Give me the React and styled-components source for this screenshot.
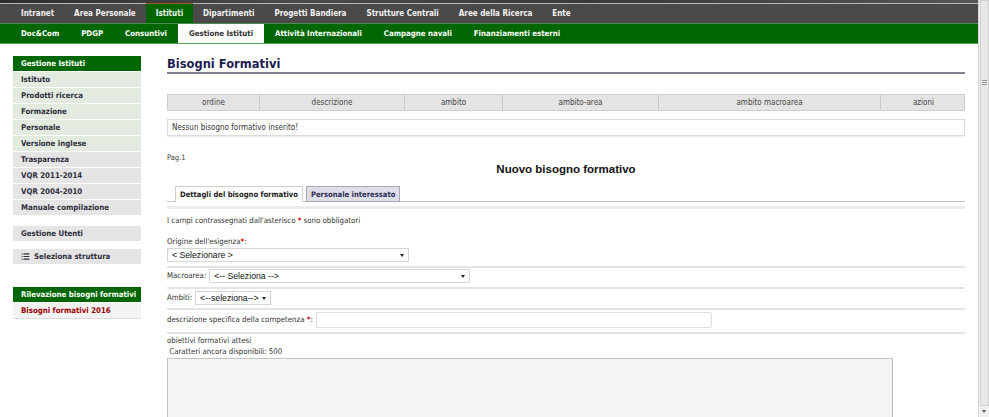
import React from 'react';
import styled, { createGlobalStyle, css } from 'styled-components';
import { List } from 'lucide-react';

const SANS = `"DejaVu Sans Condensed", "DejaVu Sans", Verdana, sans-serif`;
const ARIAL = `"Liberation Sans", Arial, sans-serif`;
const GREEN = '#006600';

const GlobalStyle = createGlobalStyle`
  html, body {
    margin: 0;
    padding: 0;
    background: #fff;
  }
  body {
    font-family: ${SANS};
    font-stretch: condensed;
    color: #333;
  }
`;

const Page = styled.div`
  display: flex;
  width: 989px;
  height: 417px;
  overflow: hidden;
`;

const Site = styled.div`
  flex: 1;
  min-width: 0;
`;

const TopStrip = styled.div`
  height: 3px;
  background: linear-gradient(90deg, #2e2e2e, #4a4a4a 30%, #3a3a3a 60%, #555 100%);
  border-bottom: 1px solid #b8b8b8;
`;

const Nav = styled.nav`
  display: flex;
  height: 19px;
  padding-left: 11px;
  background: #4a4a4b;
`;

const NavItem = styled.a`
  display: flex;
  align-items: center;
  padding: 0 10px;
  font-size: 8px;
  font-weight: bold;
  color: #f2f2f2;
  white-space: nowrap;
  ${(p) =>
    p.$active &&
    css`
      background: ${GREEN};
      box-shadow: inset 0 1px 0 #8a5a2a;
      margin-top: -1px;
    `}
`;

const SubNav = styled.nav`
  display: flex;
  height: 19px;
  padding-left: 10px;
  background: ${GREEN};
  border-top: 1px solid #4d8a4d;
  border-bottom: 1px solid #58a858;
`;

const SubNavItem = styled.a`
  display: flex;
  align-items: center;
  padding: 0 11px;
  font-size: 7.8px;
  font-weight: bold;
  color: #fff;
  white-space: nowrap;
  ${(p) =>
    p.$active &&
    css`
      background: #fff;
      color: #333;
    `}
`;

const Body = styled.div`
  display: flex;
  gap: 26px;
  padding: 12px 0 0 13px;
`;

const Sidebar = styled.aside`
  width: 128px;
  flex-shrink: 0;
  display: flex;
  flex-direction: column;
`;

const MenuGroup = styled.div`
  display: flex;
  flex-direction: column;
  gap: 1px;
  margin-bottom: ${(p) => p.$after || 0}px;
`;

const MenuHeader = styled.div`
  height: 15px;
  display: flex;
  align-items: center;
  padding-left: 8px;
  background: ${GREEN};
  color: #fff;
  font-size: 7.8px;
  font-weight: bold;
`;

const MenuItem = styled.div`
  height: 15px;
  display: flex;
  align-items: center;
  gap: 4px;
  padding-left: 8px;
  background: ${(p) => (p.$tint ? '#e3eadf' : '#e5e5e5')};
  color: #2e2e3c;
  font-size: 7.8px;
  font-weight: bold;
  ${(p) =>
    p.$current &&
    css`
      background: #f3f3f3;
      color: #9a0000;
      border-bottom: 1px solid #dcdcdc;
    `}
`;

const Main = styled.main`
  width: 798px;
  flex-shrink: 0;
  display: flex;
  flex-direction: column;
`;

const Title = styled.h1`
  margin: 0;
  height: 16px;
  line-height: 16px;
  font-family: "DejaVu Sans", Verdana, sans-serif;
  font-stretch: normal;
  font-size: 11.5px;
  font-weight: bold;
  color: #1d1d4f;
  border-bottom: 2px solid #80808f;
`;

const Table = styled.div`
  margin-top: 20px;
  display: grid;
  grid-template-columns: 92px 145px 98px 156px 222px 85px;
  height: 17px;
  border: 1px solid #cfcfcf;
  box-sizing: border-box;
  background: #e4e4e4;
`;

const HeadCell = styled.div`
  display: flex;
  align-items: center;
  justify-content: center;
  font-size: 8px;
  color: #444;
  border-right: ${(p) => (p.$last ? 'none' : '1px solid #c8c8c8')};
`;

const EmptyBox = styled.div`
  margin-top: 8px;
  height: 17px;
  box-sizing: border-box;
  border: 1px solid #dcdcdc;
  box-shadow: 0 1px 1px #eee;
  display: flex;
  align-items: center;
  padding-left: 4px;
  font-size: 8px;
  color: #333;
`;

const Pager = styled.div`
  margin-top: 18px;
  font-size: 7.5px;
  line-height: 8px;
  color: #444;
`;

const Subtitle = styled.h2`
  margin: 0;
  text-align: center;
  font-family: ${ARIAL};
  font-stretch: normal;
  font-size: 11.5px;
  line-height: 14px;
  font-weight: bold;
  color: #111;
`;

const Tabs = styled.div`
  margin-top: 10px;
  display: flex;
  gap: 3px;
  padding-left: 8px;
  border-bottom: 1px solid #c4c4c4;
`;

const Tab = styled.div`
  height: 14px;
  display: flex;
  align-items: center;
  padding: 0 4px;
  font-size: 7.6px;
  font-weight: bold;
  margin-bottom: -1px;
  border: 1px solid #cfcfcf;
  border-bottom: none;
  ${(p) =>
    p.$active
      ? css`
          background: #fff;
          color: #222;
          height: 15px;
        `
      : css`
          background: #dedee8;
          color: #2d2d55;
          border-color: #a8a8b8;
          border-bottom: 1px solid #a8a8b8;
        `}
`;

const Panel = styled.div`
  margin-top: 4px;
  border-top: 3px solid #ececec;
  display: flex;
  flex-direction: column;
`;

const Text = styled.div`
  font-size: 7.8px;
  line-height: 10px;
  color: #333;
  margin-top: ${(p) => p.$mt || 0}px;
`;

const Req = styled.span`
  color: #d00000;
  font-weight: bold;
`;

const Row = styled.div`
  display: flex;
  flex-direction: ${(p) => (p.$stack ? 'column' : 'row')};
  align-items: ${(p) => (p.$stack ? 'flex-start' : 'center')};
  gap: ${(p) => (p.$stack ? 1 : 3)}px;
  padding: ${(p) => p.$pad || '2px 0 3px'};
  border-bottom: 2px solid #e4e4e4;
`;

const Select = styled.div`
  width: ${(p) => p.$w}px;
  height: 14px;
  box-sizing: border-box;
  border: 1px solid #d6d6d6;
  background: #fff;
  display: flex;
  align-items: center;
  justify-content: space-between;
  padding: 0 4px;
  font-family: ${ARIAL};
  font-stretch: normal;
  font-size: 8.7px;
  color: #111;
`;

const Caret = styled.span`
  width: 0;
  height: 0;
  border-left: 2.5px solid transparent;
  border-right: 2.5px solid transparent;
  border-top: 3px solid #222;
`;

const Input = styled.div`
  width: 396px;
  height: 16px;
  box-sizing: border-box;
  border: 1px solid #e0e0e0;
  border-radius: 2px;
  background: #fff;
`;

const TextArea = styled.div`
  margin-top: 1px;
  width: 726px;
  height: 80px;
  box-sizing: border-box;
  border: 1px solid #c4c4c4;
  border-right-color: #b8b8b8;
  background: #f4f4f4;
`;

const Scrollbar = styled.div`
  width: 11px;
  flex-shrink: 0;
  box-sizing: border-box;
  border-left: 1px solid #d4d4d4;
  background: #f0f0f0;
  display: flex;
  flex-direction: column;
  align-items: center;
`;

const Thumb = styled.div`
  width: 9px;
  flex: 1;
  box-sizing: border-box;
  border: 1px solid #d0d0d0;
  background: #e8e8e8;
  display: flex;
  flex-direction: column;
  align-items: center;
  padding-top: 79px;
  gap: 1px;
`;

const Grip = styled.span`
  width: 5px;
  height: 1px;
  background: #9a9a9a;
`;

const ArrowDown = styled.span`
  margin: 4px 0 4px;
  width: 0;
  height: 0;
  border-left: 2.5px solid transparent;
  border-right: 2.5px solid transparent;
  border-top: 3px solid #555;
`;

const topNav = ['Intranet', 'Area Personale', 'Istituti', 'Dipartimenti', 'Progetti Bandiera', 'Strutture Centrali', 'Aree della Ricerca', 'Ente'];
const subNav = ['Doc&Com', 'PDGP', 'Consuntivi', 'Gestione Istituti', 'Attività Internazionali', 'Campagne navali', 'Finanziamenti esterni'];
const menu = [
  ['Istituto', true],
  ['Prodotti ricerca', true],
  ['Formazione', true],
  ['Personale', true],
  ['Versione inglese', true],
  ['Trasparenza', false],
  ['VQR 2011-2014', false],
  ['VQR 2004-2010', false],
  ['Manuale compilazione', false],
];
const columns = ['ordine', 'descrizione', 'ambito', 'ambito-area', 'ambito macroarea', 'azioni'];

export default function App() {
  return (
    <>
      <GlobalStyle />
      <Page>
        <Site>
          <TopStrip />
          <Nav>
            {topNav.map((n) => (
              <NavItem key={n} $active={n === 'Istituti'}>{n}</NavItem>
            ))}
          </Nav>
          <SubNav>
            {subNav.map((n) => (
              <SubNavItem key={n} $active={n === 'Gestione Istituti'}>{n}</SubNavItem>
            ))}
          </SubNav>
          <Body>
            <Sidebar>
              <MenuGroup $after={11}>
                <MenuHeader>Gestione Istituti</MenuHeader>
                {menu.map(([label, tint]) => (
                  <MenuItem key={label} $tint={tint}>{label}</MenuItem>
                ))}
              </MenuGroup>
              <MenuGroup $after={8}>
                <MenuItem>Gestione Utenti</MenuItem>
              </MenuGroup>
              <MenuGroup $after={23}>
                <MenuItem>
                  <List size={9} strokeWidth={3} />
                  Seleziona struttura
                </MenuItem>
              </MenuGroup>
              <MenuGroup>
                <MenuHeader>Rilevazione bisogni formativi</MenuHeader>
                <MenuItem $current>Bisogni formativi 2016</MenuItem>
              </MenuGroup>
            </Sidebar>
            <Main>
              <Title>Bisogni Formativi</Title>
              <Table>
                {columns.map((c, i) => (
                  <HeadCell key={c} $last={i === columns.length - 1}>{c}</HeadCell>
                ))}
              </Table>
              <EmptyBox>Nessun bisogno formativo inserito!</EmptyBox>
              <Pager>Pag.1</Pager>
              <Subtitle>Nuovo bisogno formativo</Subtitle>
              <Tabs>
                <Tab $active>Dettagli del bisogno formativo</Tab>
                <Tab>Personale interessato</Tab>
              </Tabs>
              <Panel>
                <Text $mt={7}>
                  I campi contrassegnati dall'asterisco <Req>*</Req> sono obbligatori
                </Text>
                <Row $stack $pad="11px 0 4px">
                  <Text>
                    Origine dell'esigenza<Req>*</Req>:
                  </Text>
                  <Select $w={242}>
                    &lt; Selezionare &gt;
                    <Caret />
                  </Select>
                </Row>
                <Row $pad="1px 0 4px">
                  <Text>Macroarea:</Text>
                  <Select $w={261}>
                    &lt;-- Seleziona --&gt;
                    <Caret />
                  </Select>
                </Row>
                <Row $pad="2px 0 3px">
                  <Text>Ambiti:</Text>
                  <Select $w={76}>
                    &lt;--seleziona--&gt;
                    <Caret />
                  </Select>
                </Row>
                <Row $pad="2px 0 4px">
                  <Text>
                    descrizione specifica della competenza <Req>*</Req>:
                  </Text>
                  <Input />
                </Row>
                <Text $mt={2}>obiettivi formativi attesi</Text>
                <Text $mt={1}>&nbsp;Caratteri ancora disponibili: 500</Text>
                <TextArea />
              </Panel>
            </Main>
          </Body>
        </Site>
        <Scrollbar>
          <Thumb>
            <Grip />
            <Grip />
            <Grip />
          </Thumb>
          <ArrowDown />
        </Scrollbar>
      </Page>
    </>
  );
}
